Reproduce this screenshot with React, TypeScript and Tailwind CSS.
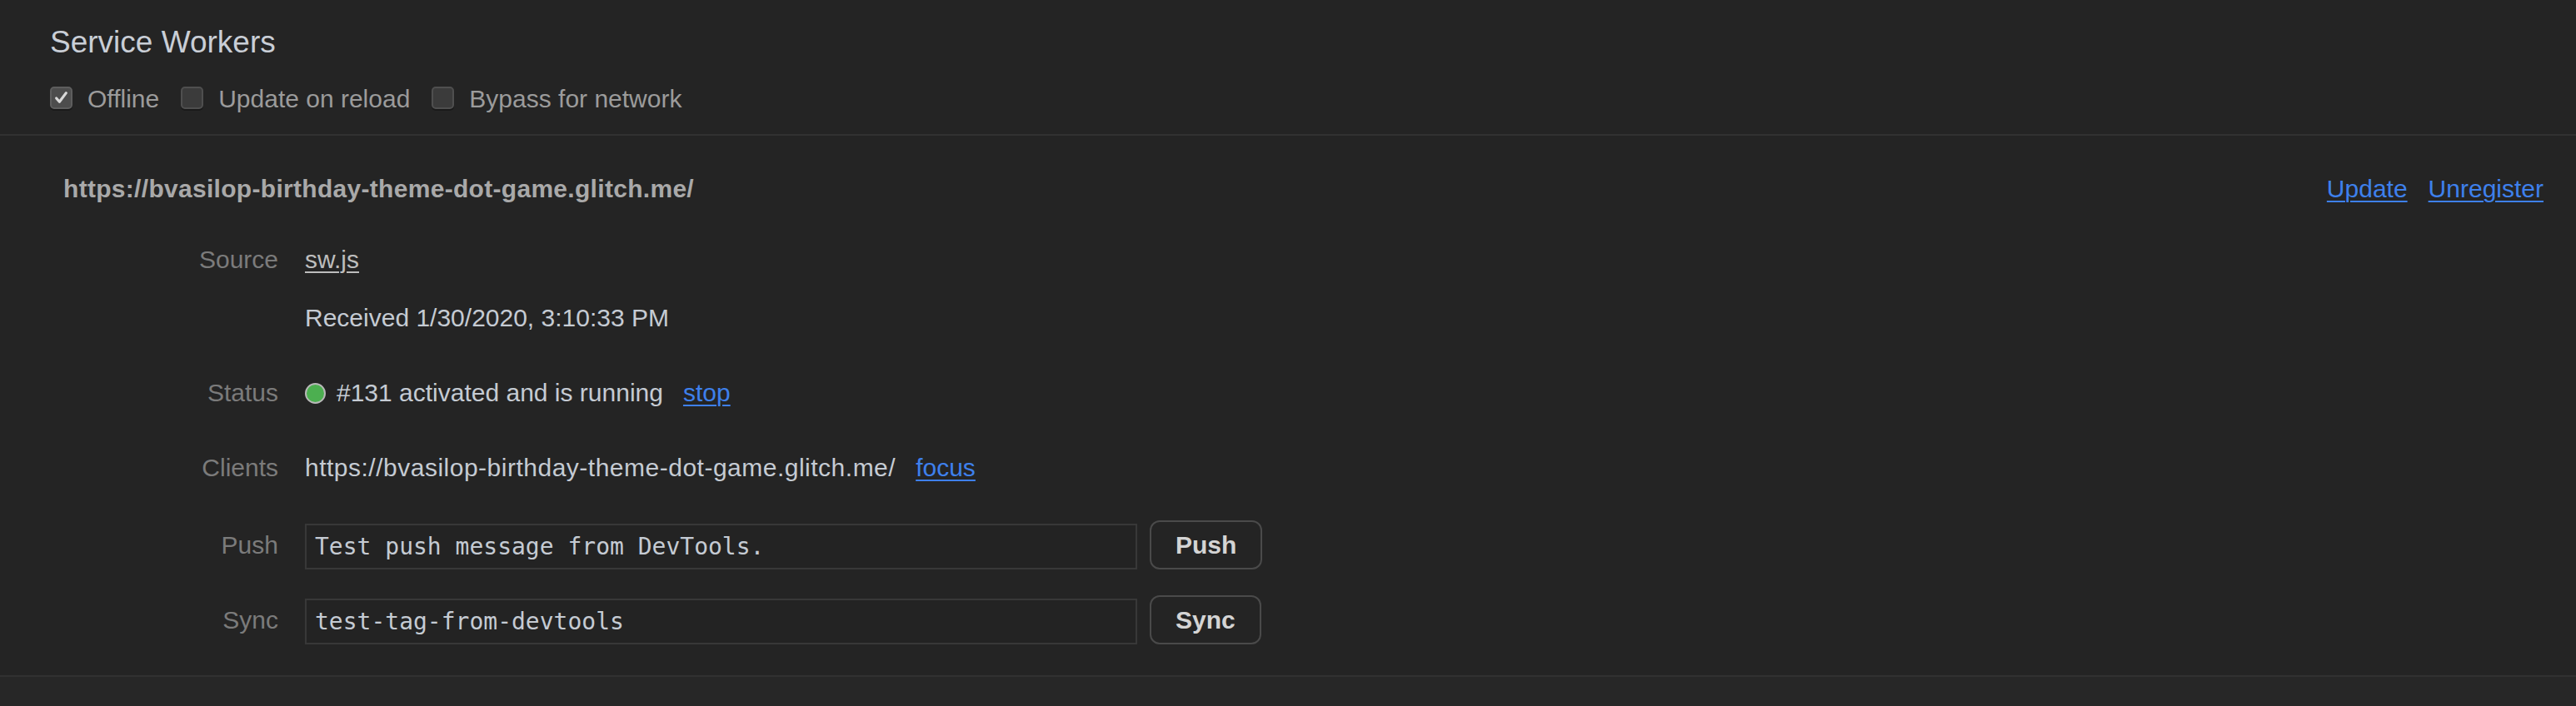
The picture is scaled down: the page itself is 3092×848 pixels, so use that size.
import React from 'react';

const sans = { fontFamily: '"Liberation Sans", Arial, Helvetica, sans-serif' };

function Checkbox({ checked, label }: { checked?: boolean; label: string }) {
  return (
    <label className="flex items-center">
      <span
        className={
          checked
            ? 'mb-1 flex h-[27px] w-[27px] items-center justify-center rounded-[5px] border-2 border-[#5e5e5e] bg-[#4d4d4d] shadow-[0_2px_0_#1a1a1a]'
            : 'mb-1 flex h-[27px] w-[27px] items-center justify-center rounded-[5px] border-2 border-[#4f4f4f] bg-[#3b3b3b] shadow-[0_2px_0_#1a1a1a]'
        }
      >
        {checked && (
          <svg width="17" height="17" viewBox="0 0 16 16">
            <path d="M2.5 8.5 L6 12.5 L13.5 2.5" fill="none" stroke="#d9d9d9" strokeWidth="3" strokeLinecap="round" strokeLinejoin="round" />
          </svg>
        )}
      </span>
      <span className="ml-[18px] text-[30px] leading-[36px] text-[#9b9b9b]">{label}</span>
    </label>
  );
}

function Row({ label, children, className = '' }: { label: string; children: React.ReactNode; className?: string }) {
  return (
    <div className={'flex ' + className}>
      <div className="w-[258px] shrink-0 text-right text-[30px] leading-[36px] text-[#7b7b7b]">{label}</div>
      <div className="ml-[32px] flex-1">{children}</div>
    </div>
  );
}

function InputRow({ label, value, button }: { label: string; value: string; button: string }) {
  return (
    <div className="flex h-[59px] items-center">
      <div className="w-[258px] shrink-0 text-right text-[30px] leading-[36px] text-[#7b7b7b]">{label}</div>
      <div className="ml-[32px] flex h-full items-end">
        <div
          className="flex h-[55px] w-[999px] items-center border-2 border-[#383838] bg-[#232323] pl-[10px] text-[28px] text-[#c5cbd3]"
          style={{ fontFamily: '"DejaVu Sans Mono", "Liberation Mono", monospace' }}
        >
          {value}
        </div>
        <button className="ml-[15px] h-[59px] rounded-[12px] border-2 border-[#4a4a4a] bg-[#242424] px-[29px] text-[30px] font-bold text-[#d4d4d4]">
          {button}
        </button>
      </div>
    </div>
  );
}

export default function App() {
  return (
    <div className="h-[848px] w-full overflow-hidden bg-[#242424]" style={sans}>
      <div className="border-b-2 border-[#313131] pl-[60px] pt-[29px] pb-[24px]">
        <h1 className="text-[37px] leading-[44px] font-normal text-[#c9ced6]">Service Workers</h1>
        <div className="mt-[28px] flex h-[36px] items-center gap-[26px]">
          <Checkbox checked label="Offline" />
          <Checkbox label="Update on reload" />
          <Checkbox label="Bypass for network" />
        </div>
      </div>

      <div className="border-b-2 border-[#313131] pl-[76px] pr-[39px] pt-[46px] pb-[37px]">
        <div className="flex h-[36px] items-center justify-between text-[30px] leading-[36px]">
          <div className="font-bold tracking-[0.3px] text-[#a9a9a9]">https://bvasilop-birthday-theme-dot-game.glitch.me/</div>
          <div className="flex gap-[25px] text-[#3e80ec]">
            <a className="underline decoration-2 underline-offset-[4px]">Update</a>
            <a className="underline decoration-2 underline-offset-[4px]">Unregister</a>
          </div>
        </div>

        <Row label="Source" className="mt-[49px]">
          <div className="text-[30px] leading-[36px]">
            <a className="text-[#bdbdbd] underline decoration-2 underline-offset-[4px]">sw.js</a>
          </div>
          <div className="mt-[34px] text-[30px] leading-[36px] text-[#c5cbd3]">Received 1/30/2020, 3:10:33 PM</div>
        </Row>

        <Row label="Status" className="mt-[54px]">
          <div className="flex items-center text-[30px] leading-[36px] text-[#c5cbd3]">
            <span className="h-[25px] w-[25px] rounded-full border-2 border-[#b8b8b8] bg-[#4caf50]" />
            <span className="ml-[13px]">#131 activated and is running</span>
            <a className="ml-[24px] text-[#3e80ec] underline decoration-2 underline-offset-[4px]">stop</a>
          </div>
        </Row>

        <Row label="Clients" className="mt-[54px]">
          <div className="flex items-center text-[30px] leading-[36px] text-[#c5cbd3]">
            <span className="tracking-[0.5px]">https://bvasilop-birthday-theme-dot-game.glitch.me/</span>
            <a className="ml-[24px] text-[#3e80ec] underline decoration-2 underline-offset-[4px]">focus</a>
          </div>
        </Row>

        <div className="mt-[45px]">
          <InputRow label="Push" value="Test push message from DevTools." button="Push" />
        </div>
        <div className="mt-[31px]">
          <InputRow label="Sync" value="test-tag-from-devtools" button="Sync" />
        </div>
      </div>

      <div className="h-full bg-[#272727]" />
    </div>
  );
}
